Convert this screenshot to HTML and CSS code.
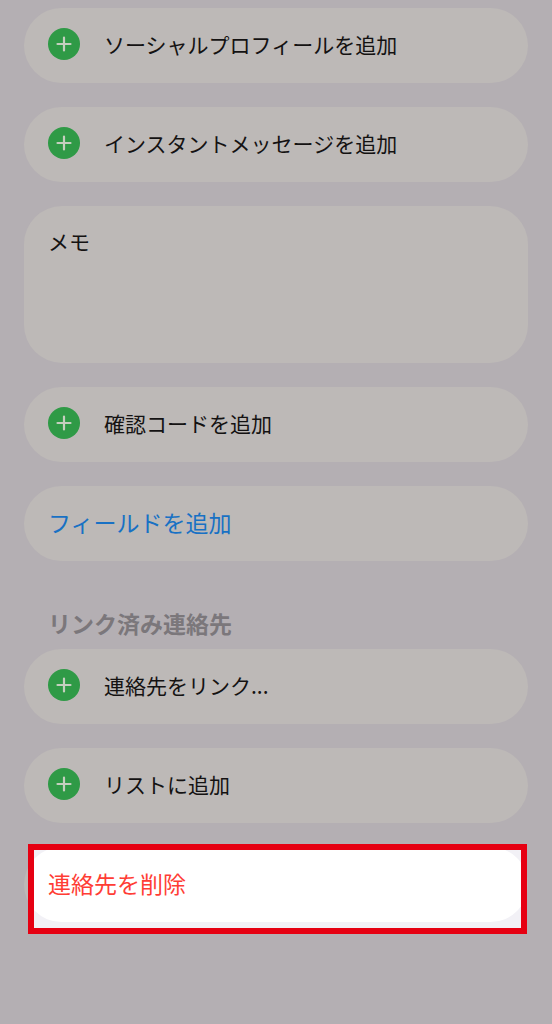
FILE: index.html
```html
<!DOCTYPE html>
<html lang="ja">

<head>
    <meta charset="UTF-8">
    <meta name="viewport" content="width=device-width, initial-scale=1">
    <title>連絡先を編集</title>
    <link rel="stylesheet" href="styles.css">
</head>

<body>
    <svg class="symbols" aria-hidden="true">
        <symbol id="plus" viewBox="0 0 32 32">
            <circle cx="16" cy="16" r="16" fill="#2f9a46"/>
            <path d="M16 9.5v13M9.5 16h13" stroke="#c5cfbf" stroke-width="2.2" stroke-linecap="round"/>
        </symbol>
    </svg>

    <main class="contact-form">
        <button type="button" class="card row">
            <svg class="plus-icon" aria-hidden="true"><use href="#plus"/></svg>
            <span>ソーシャルプロフィールを追加</span>
        </button>

        <button type="button" class="card row">
            <svg class="plus-icon" aria-hidden="true"><use href="#plus"/></svg>
            <span>インスタントメッセージを追加</span>
        </button>

        <div class="card memo">
            <label for="memo">メモ</label>
            <textarea id="memo" name="memo"></textarea>
        </div>

        <button type="button" class="card row">
            <svg class="plus-icon" aria-hidden="true"><use href="#plus"/></svg>
            <span>確認コードを追加</span>
        </button>

        <button type="button" class="card row add-field">フィールドを追加</button>

        <section class="linked">
            <h2>リンク済み連絡先</h2>
            <button type="button" class="card row">
                <svg class="plus-icon" aria-hidden="true"><use href="#plus"/></svg>
                <span>連絡先をリンク...</span>
            </button>
        </section>

        <button type="button" class="card row">
            <svg class="plus-icon" aria-hidden="true"><use href="#plus"/></svg>
            <span>リストに追加</span>
        </button>

        <button type="button" class="card row delete">
            <span class="highlight"></span>
            <span class="delete-text">連絡先を削除</span>
        </button>
    </main>
</body>

</html>
```

FILE: styles.css
```css
* {
    box-sizing: border-box;
}

body {
    margin: 0;
    min-height: 100vh;
    background-color: #b4afb3;
    color: #141212;
    font-family: "Noto Sans CJK JP", sans-serif;
    font-size: 21px;
    line-height: 30px;
}

.symbols {
    display: none;
}

.contact-form {
    display: flex;
    flex-direction: column;
    gap: 24px;
    padding: 8px 24px 24px;
}

.card {
    width: 100%;
    border: none;
    border-radius: 38px;
    background-color: #bdb9b7;
    color: inherit;
    font: inherit;
    text-align: left;
}

.row {
    display: flex;
    align-items: center;
    gap: 24px;
    height: 75px;
    padding: 0 24px 3px;
    cursor: pointer;
}

.plus-icon {
    flex: none;
    width: 32px;
    height: 32px;
}

.memo {
    display: flex;
    flex-direction: column;
    height: 157px;
    padding: 20px 24px;
}

.memo textarea {
    flex: 1;
    width: 100%;
    padding: 0;
    border: none;
    outline: none;
    resize: none;
    background: transparent;
    font: inherit;
}

.add-field {
    color: #1871c4;
    font-size: 23px;
}

.linked h2 {
    margin: 22px 24px 10px;
    color: #7b777b;
    font-size: 23px;
    font-weight: 700;
    line-height: 32px;
}

.delete {
    position: relative;
    color: #ff3d35;
    font-size: 23px;
}

/* red frame that sits over the card */
.highlight {
    position: absolute;
    top: -3px;
    right: 1px;
    bottom: -12px;
    left: 4px;
    overflow: hidden;
    border: 6px solid #e60012;
    background-color: #f2f1f6;
}

/* undimmed card, cut off by the frame */
.highlight::before {
    content: "";
    position: absolute;
    top: -3px;
    right: -7px;
    bottom: 6px;
    left: -10px;
    border-radius: 38px;
    background-color: #fff;
}

.delete-text {
    position: relative;
}
```
